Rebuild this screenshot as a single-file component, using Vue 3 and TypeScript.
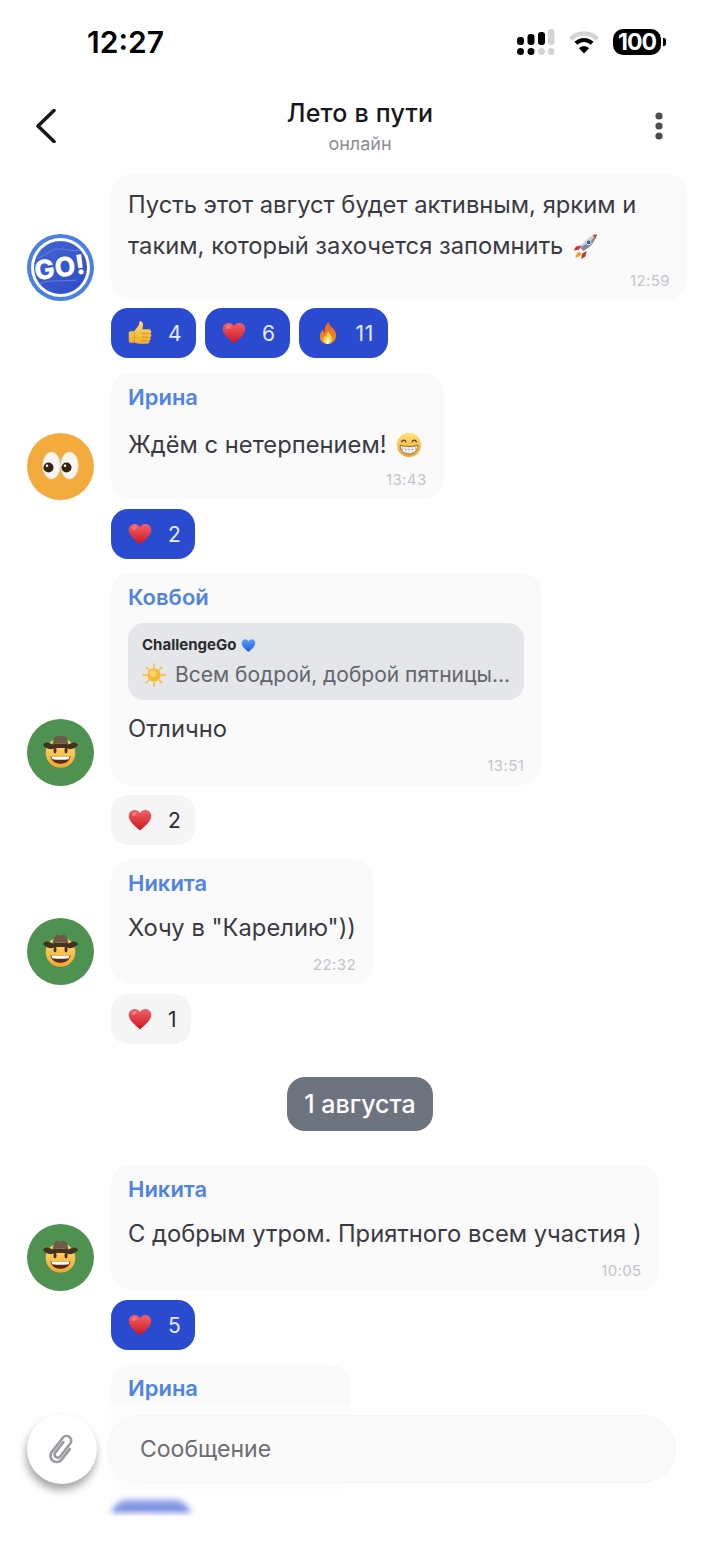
<script setup lang="ts">
type Emoji = 'thumb' | 'heart' | 'fire'

interface Reaction {
  emoji: Emoji
  count: number
}

interface ChatItem {
  id: number
  date?: string
  avatar?: 'go' | 'eyes' | 'cowboy'
  name?: string
  quote?: string
  text?: string
  trailing?: 'rocket' | 'grin'
  time?: string
  active?: boolean
  reactions?: Reaction[]
}

const items: ChatItem[] = [
  {
    id: 1,
    avatar: 'go',
    text: 'Пусть этот август будет активным, ярким и таким, который захочется запомнить',
    trailing: 'rocket',
    time: '12:59',
    active: true,
    reactions: [
      { emoji: 'thumb', count: 4 },
      { emoji: 'heart', count: 6 },
      { emoji: 'fire', count: 11 },
    ],
  },
  {
    id: 2,
    avatar: 'eyes',
    name: 'Ирина',
    text: 'Ждём с нетерпением!',
    trailing: 'grin',
    time: '13:43',
    active: true,
    reactions: [{ emoji: 'heart', count: 2 }],
  },
  {
    id: 3,
    avatar: 'cowboy',
    name: 'Ковбой',
    quote: 'Всем бодрой, доброй пятницы...',
    text: 'Отлично',
    time: '13:51',
    reactions: [{ emoji: 'heart', count: 2 }],
  },
  {
    id: 4,
    avatar: 'cowboy',
    name: 'Никита',
    text: 'Хочу в "Карелию"))',
    time: '22:32',
    reactions: [{ emoji: 'heart', count: 1 }],
  },
  { id: 5, date: '1 августа' },
  {
    id: 6,
    avatar: 'cowboy',
    name: 'Никита',
    text: 'С добрым утром. Приятного всем участия )',
    time: '10:05',
    active: true,
    reactions: [{ emoji: 'heart', count: 5 }],
  },
  // scrolled under the composer, only the sender and the pill's top show
  {
    id: 7,
    name: 'Ирина',
    active: true,
    reactions: [{ emoji: 'heart', count: 1 }],
  },
]
</script>

<template>
  <div class="screen">
    <svg class="sprites" width="0" height="0" aria-hidden="true">
      <defs>
        <linearGradient id="g-heart" x1="0" y1="0" x2="0" y2="1">
          <stop offset="0" stop-color="#f4626a" />
          <stop offset="1" stop-color="#c9151f" />
        </linearGradient>
        <linearGradient id="g-blue" x1="0" y1="0" x2="0" y2="1">
          <stop offset="0" stop-color="#5b9cf5" />
          <stop offset="1" stop-color="#1f5fe0" />
        </linearGradient>
        <linearGradient id="g-thumb" x1="0" y1="0" x2="0" y2="1">
          <stop offset="0" stop-color="#ffdc6e" />
          <stop offset="1" stop-color="#eea92c" />
        </linearGradient>
        <linearGradient id="g-face" x1="0" y1="0" x2="0" y2="1">
          <stop offset="0" stop-color="#ffe27a" />
          <stop offset="1" stop-color="#f2a52e" />
        </linearGradient>
        <linearGradient id="g-fire" x1="0" y1="0" x2="0" y2="1">
          <stop offset="0" stop-color="#ee5a24" />
          <stop offset="1" stop-color="#f59a20" />
        </linearGradient>
        <linearGradient id="g-go" x1="0" y1="0" x2="1" y2="1">
          <stop offset="0" stop-color="#4466d2" />
          <stop offset="1" stop-color="#2e4ac8" />
        </linearGradient>
        <symbol id="e-heart" viewBox="0 0 32 32">
          <path d="M16 30C9 23.500 1 17.500 1 10.500 1 5.500 4.800 2.500 8.900 2.500c2.900 0 5.600 1.500 7.100 4.300 1.500-2.800 4.200-4.300 7.100-4.300 4.100 0 7.900 3 7.900 8 0 7-8 13-15 19.500z" fill="url(#g-heart)" />
          <ellipse cx="8.500" cy="8" rx="3.500" ry="2.200" fill="#fff" opacity=".25" transform="rotate(-30 8.500 8)" />
        </symbol>
        <symbol id="e-blue" viewBox="0 0 32 32">
          <path d="M16 30C9 23.500 1.500 17.500 1.500 10.500 1.500 5.500 5.300 2.500 9.200 2.500c2.900 0 5.300 1.500 6.800 4.300 1.500-2.800 3.900-4.300 6.800-4.300 3.900 0 7.700 3 7.700 8 0 7-7.500 13-14.500 19.500z" fill="url(#g-blue)" />
        </symbol>
        <symbol id="e-thumb" viewBox="0 0 32 32">
          <path d="M1 16c0-1.300 1-2.300 2.300-2.300h5l5.300-7c.9-1.400 1.300-2.800 1.300-4.200C14.900.7 15.900 0 17 .3c2.200.6 3.300 2.800 3 5l-.8 5.700h8.600c1.900 0 3.200 1.400 3.200 3.100 0 1-.5 1.800-1.100 2.400.8.600 1.200 1.500 1.200 2.400 0 1.200-.7 2.200-1.600 2.700.4.500.6 1.200.6 1.900 0 1.200-.7 2.200-1.700 2.600.2.400.3.800.3 1.300 0 1.700-1.400 2.900-3.200 2.900H14c-2.300 0-3.500-1-5.200-1.300H3.300C2 29 1 28 1 26.700z" fill="url(#g-thumb)" />
          <path d="M19 16.500h9M19 21.500h8M19 26h6" stroke="#c98518" stroke-width="1" stroke-linecap="round" fill="none" />
          <path d="M8.800 14v14.500" stroke="#d8941f" stroke-width="1" fill="none" />
        </symbol>
        <symbol id="e-fire" viewBox="0 0 32 32">
          <path d="M16.500 1c1 5 6.200 7.800 8.800 12.500 2.700 5 1.300 11-2.400 14.200-2 1.800-4.500 3-7.200 3-6 0-10.500-4.500-10.500-10.200 0-4 2-6.800 3.900-9.300.3 2 1 3.300 2.400 4.200C11 10.500 12.500 5 16.500 1z" fill="url(#g-fire)" />
          <path d="M16.500 14c.6 2.700 3.900 4.600 4.700 8 .8 3.600-1.900 8.500-5.400 8.500-3.600 0-6.200-3-6-6.300.2-2.500 1.700-4 2.800-5.300.2 1 .6 1.700 1.300 2.100 0-2.700.8-5.100 2.600-7z" fill="#fcd34a" />
          <path d="M16 21c.3 1.600 2.200 2.800 2.400 5 .2 2.300-1 4.500-2.700 4.500-2 0-3.200-1.800-3-3.700.2-2 2.400-3.600 3.300-5.800z" fill="#fff3c4" />
        </symbol>
        <symbol id="e-rocket" viewBox="0 0 32 32">
          <path d="M12 15 5 16.500l-3 5 6.500-.8z" fill="#c9352b" />
          <path d="M18 22l-1.500 7-5 3 .8-6.500z" fill="#c9352b" />
          <path d="M9 23c-2.500 1-4 3-5 7.500 4.500-1 6.500-2.500 7.500-5z" fill="#f59a20" />
          <path d="M10 18C15 9 21 4 30.500 1.500 28 11 23 17 14 22z" fill="#c9ced8" />
          <path d="M10 18 12 20l2 2C23 17 28 11 30.500 1.500 26 8 19 13 10 18z" fill="#7f8795" />
          <path d="M25 2.800c1 .6 3.400 3 4.200 4.300l1.300-5.600z" fill="#d2382c" />
          <circle cx="20.500" cy="11.500" r="3" fill="#3f5f8f" stroke="#eef0f4" stroke-width="1.200" />
        </symbol>
        <symbol id="e-grin" viewBox="0 0 32 32">
          <circle cx="16" cy="16" r="15" fill="url(#g-face)" />
          <path d="M7 12c.8-2.600 4.200-2.600 5 0M20 12c.8-2.600 4.200-2.600 5 0" stroke="#5a3a12" stroke-width="1.600" fill="none" stroke-linecap="round" />
          <path d="M5 16.500c7 1.800 15 1.800 22 0 0 6.500-4.800 10.500-11 10.500S5 23 5 16.500z" fill="#fff" stroke="#7a4a14" stroke-width="1" />
          <path d="M5.500 20.500c6.500 1.400 14.500 1.400 21 0M8 17.300v8M12 17.800v8.800M16 18v9M20 17.800v8.800M24 17.300v8" stroke="#a9a9a9" stroke-width=".7" fill="none" />
        </symbol>
        <symbol id="e-sun" viewBox="0 0 32 32">
          <g stroke="#f5c24a" stroke-width="2.400" stroke-linecap="round">
            <path d="M16 1.500v4M16 26.500v4M1.500 16h4M26.500 16h4M5.800 5.800l2.800 2.800M23.400 23.400l2.800 2.800M5.800 26.200l2.800-2.800M23.400 8.600l2.800-2.800" />
          </g>
          <circle cx="16" cy="16" r="9" fill="#f7b92e" />
          <circle cx="14.500" cy="14" r="4.500" fill="#fde08a" opacity=".7" />
        </symbol>
        <symbol id="e-eyes" viewBox="0 0 67 67">
          <ellipse cx="24.500" cy="32.500" rx="8.800" ry="13.500" fill="#f6f5f0" stroke="#dcdad2" stroke-width=".8" />
          <ellipse cx="42.500" cy="32.500" rx="8.800" ry="13.500" fill="#f6f5f0" stroke="#dcdad2" stroke-width=".8" />
          <circle cx="21.500" cy="34.500" r="5" fill="#33200e" />
          <circle cx="39.500" cy="34.500" r="5" fill="#33200e" />
          <circle cx="20" cy="32.800" r="1.300" fill="#fff" />
          <circle cx="38" cy="32.800" r="1.300" fill="#fff" />
        </symbol>
        <symbol id="e-cowboy" viewBox="0 0 67 67">
          <circle cx="33.500" cy="34" r="14.800" fill="url(#g-face)" />
          <path d="M16 26c.5-1.800 3-2.800 5.500-2.300 1.500.3 2.800.9 3.800 1.600 5.500-1.200 11-1.200 16.400 0 1-.7 2.300-1.300 3.800-1.600 2.500-.5 5 .5 5.500 2.300-1.200 2-4.500 4-8 4.300-5.500-1.800-13.500-1.800-19 0-3.500-.3-6.800-2.300-8-4.300z" fill="#43301f" />
          <path d="M25.500 25.500c.5-3.500 1.800-8.500 4.500-8.800 1.500-.2 2.300.8 3.500.8s2-1 3.500-.8c2.700.3 4 5.300 4.500 8.800-5.500-1.200-10.500-1.200-16 0z" fill="#6f5a4a" />
          <ellipse cx="28" cy="31.500" rx="1.500" ry="2.800" fill="#4a2c10" />
          <ellipse cx="39" cy="31.500" rx="1.500" ry="2.800" fill="#4a2c10" />
          <path d="M23.500 37c6.500 1.200 13.500 1.200 20 0-.5 5-5 7.800-10 7.800s-9.500-2.800-10-7.800z" fill="#5a2c12" />
          <path d="M24.300 37.300c6 1 12.400 1 18.400 0-.2 1.300-.6 2.200-1.100 2.900-5 .7-11.200.7-16.200 0-.5-.7-.9-1.600-1.100-2.900z" fill="#fff" />
        </symbol>
      </defs>
    </svg>

    <div class="status-bar">
      <span class="clock">12:27</span>
      <div class="status-icons">
        <svg width="38" height="26" viewBox="0 0 38 26">
          <rect x="0" y="8" width="7" height="8" rx="3" fill="#000" />
          <rect x="10.500" y="5" width="7" height="11" rx="3" fill="#000" />
          <rect x="21" y="3" width="7" height="13" rx="3" fill="#000" />
          <rect x="31" y="0" width="6.500" height="16" rx="3" fill="#d4d4d6" />
          <rect x="0" y="19" width="7" height="7" rx="3.500" fill="#000" />
          <rect x="10.500" y="19" width="7" height="7" rx="3.500" fill="#000" />
          <rect x="21" y="19" width="7" height="7" rx="3.500" fill="#d4d4d6" />
          <rect x="31" y="19" width="6.500" height="7" rx="3.500" fill="#d4d4d6" />
        </svg>
        <svg width="32" height="24" viewBox="0 0 32 24">
          <path d="M2.500 9C10 1.500 22 1.500 29.500 9" stroke="#d4d4d6" stroke-width="4.500" fill="none" />
          <path d="M7.800 13.200c4.700-4.400 11.700-4.400 16.400 0" stroke="#000" stroke-width="4" fill="none" />
          <path d="M16 23.500l-5-5.300c2.800-2.600 7.200-2.600 10 0z" fill="#000" />
        </svg>
        <div class="battery">
          <span>100</span>
        </div>
      </div>
    </div>

    <header class="chat-header">
      <svg class="back" width="20" height="34" viewBox="0 0 20 34">
        <path d="M18 1.500 2 17l16 15.500" stroke="#17181c" stroke-width="3.600" fill="none" stroke-linecap="round" stroke-linejoin="round" />
      </svg>
      <div class="chat-title">
        <h1>Лето в пути</h1>
        <p>онлайн</p>
      </div>
      <svg class="more" width="8" height="28" viewBox="0 0 8 28">
        <circle cx="4" cy="4" r="3.600" fill="#4b4c52" />
        <circle cx="4" cy="14" r="3.600" fill="#4b4c52" />
        <circle cx="4" cy="24" r="3.600" fill="#4b4c52" />
      </svg>
    </header>

    <main class="chat">
      <template v-for="item in items" :key="item.id">
        <div v-if="item.date" class="date-pill">{{ item.date }}</div>
        <section v-else class="group">
          <div class="message">
            <div :class="['avatar', item.avatar]">
              <svg v-if="item.avatar === 'go'" width="67" height="67" viewBox="0 0 67 67">
                <circle cx="33.500" cy="33.500" r="33.500" fill="#4b7fe2" />
                <circle cx="33.500" cy="33.500" r="29.500" fill="#fff" />
                <circle cx="33.500" cy="33.500" r="26.500" fill="url(#g-go)" />
                <path d="M10 24c8-1 12-8 20-9 6-1 14 3 23 1M12 50c10-5 22-2 38-4" stroke="#6d8ce0" stroke-width=".8" fill="none" />
                <text class="go-text" x="33" y="43" text-anchor="middle" transform="rotate(-8 33 36)">GO!</text>
              </svg>
              <svg v-else-if="item.avatar" width="67" height="67"><use :href="`#e-${item.avatar}`" /></svg>
            </div>
            <div :class="['bubble', { clipped: !item.text }]">
              <div v-if="item.name" class="sender">{{ item.name }}</div>
              <div v-if="item.quote" class="quote">
                <div class="quote-author">ChallengeGo <svg width="15" height="15"><use href="#e-blue" /></svg></div>
                <div class="quote-text"><svg width="24" height="24"><use href="#e-sun" /></svg>{{ item.quote }}</div>
              </div>
              <p v-if="item.text" :class="['text', { 'with-emoji': item.trailing }]">{{ item.text }}<svg v-if="item.trailing" class="trailing" width="26" height="26"><use :href="`#e-${item.trailing}`" /></svg></p>
              <div v-if="item.time" class="time">{{ item.time }}</div>
            </div>
          </div>
          <div class="reactions">
            <div v-for="r in item.reactions" :key="r.emoji" :class="['reaction', { active: item.active }]">
              <svg width="24" height="24"><use :href="`#e-${r.emoji}`" /></svg>
              <span>{{ r.count }}</span>
            </div>
          </div>
        </section>
      </template>
    </main>

    <div class="composer">
      <button class="attach" type="button" aria-label="Прикрепить">
        <svg width="34" height="36" viewBox="-17 -18 34 36">
          <path transform="rotate(38) scale(.78)" d="M8 -6V11a8 8 0 0 1-16 0V-12a6 6 0 0 1 12 0V9a4 4 0 0 1-8 0V-8" stroke="#9b9ca1" stroke-width="3.400" fill="none" stroke-linecap="round" />
        </svg>
      </button>
      <div class="input">Сообщение</div>
    </div>
  </div>
</template>

<style scoped>
.screen {
  position: relative;
  width: 720px;
  height: 1558px;
  display: flex;
  flex-direction: column;
  overflow: hidden;
  background: #fff;
  font-family: Inter, "Noto Sans", sans-serif;
  color: #3a3b42;
}

.sprites {
  position: absolute;
}

.status-bar {
  height: 84px;
  flex: none;
  display: flex;
  align-items: center;
  justify-content: space-between;
  padding: 0 59px 0 87px;
}

.clock {
  font-size: 30px;
  font-weight: 600;
  color: #000;
}

.status-icons {
  display: flex;
  align-items: center;
  gap: 13px;
}

.battery {
  position: relative;
  width: 48px;
  height: 26px;
  border-radius: 10px;
  background: #000;
  color: #fff;
  font-size: 23px;
  font-weight: 700;
  letter-spacing: -1px;
  display: flex;
  align-items: center;
  justify-content: center;
}

.battery::after {
  content: "";
  position: absolute;
  right: -5px;
  top: 9px;
  width: 3px;
  height: 8px;
  border-radius: 0 2px 2px 0;
  background: #000;
}

.chat-header {
  height: 90px;
  flex: none;
  box-sizing: border-box;
  display: grid;
  grid-template-columns: 1fr auto 1fr;
  align-items: center;
  padding: 0 36px 6px;
}

.more {
  justify-self: end;
  margin-right: 21px;
}

.chat-title {
  text-align: center;
}

.chat-title h1 {
  margin: 0;
  font-size: 25px;
  line-height: 30px;
  font-weight: 500;
  letter-spacing: 0.2px;
  color: #17181c;
}

.chat-title p {
  margin: 5px 0 0;
  font-size: 18px;
  line-height: 22px;
  color: #8b8d94;
}

.chat {
  flex: 1;
  min-height: 0;
  display: flex;
  flex-direction: column;
  align-items: flex-start;
  gap: 14px;
  padding-left: 27px;
  overflow: hidden;
}

.group {
  display: flex;
  flex-direction: column;
  gap: 10px;
}

.group:first-child {
  gap: 8px;
  margin-bottom: 1px;
}

.message {
  display: flex;
  align-items: flex-end;
  gap: 17px;
}

.avatar {
  width: 67px;
  height: 67px;
  flex: none;
  margin-bottom: -1px;
  border-radius: 50%;
}

.avatar svg {
  display: block;
}

.avatar.eyes {
  background: #f4ab3d;
}

.avatar.cowboy {
  background: #4f9150;
}

.go-text {
  font-family: Inter, sans-serif;
  font-size: 27px;
  font-weight: 800;
  fill: #fff;
}

.bubble {
  max-width: 576px;
  box-sizing: border-box;
  padding: 10px 17px;
  border-radius: 20px;
  background: #fafafb;
}

.bubble.clipped {
  width: 239px;
  height: 126px;
}

.sender {
  margin-top: 1px;
  font-size: 22px;
  line-height: 26px;
  font-weight: 600;
  color: #5083e2;
}

.text {
  margin: 0;
  font-size: 23.75px;
  line-height: 41px;
  color: #3a3b42;
}

.sender + .text {
  margin-top: 11px;
}

.sender + .text.with-emoji {
  margin-top: 14px;
}

.trailing {
  margin: 0 5px 0 9px;
  vertical-align: -5px;
}

.quote {
  margin: 13px 0 8px;
  padding: 11px 14px 10px;
  border-radius: 16px;
  background: #e4e6ea;
  white-space: nowrap;
}

.quote-author {
  display: flex;
  align-items: center;
  gap: 5px;
  font-size: 15px;
  line-height: 22px;
  font-weight: 700;
  color: #2a2b30;
}

.quote-text {
  display: flex;
  align-items: center;
  gap: 9px;
  margin-top: 4px;
  font-size: 21px;
  line-height: 30px;
  color: #63656c;
}

.time {
  margin-top: 8px;
  font-size: 15px;
  line-height: 18px;
  letter-spacing: 0.4px;
  text-align: right;
  color: #c2c4c9;
}

.with-emoji + .time {
  margin-top: 6px;
}

.reactions {
  display: flex;
  gap: 9px;
  margin-left: 84px;
}

.reaction {
  height: 50px;
  display: flex;
  align-items: center;
  gap: 16px;
  padding: 0 14px 0 17px;
  border-radius: 17px;
  background: #f5f5f6;
  font-size: 21px;
  letter-spacing: 0.5px;
  color: #2a2b30;
}

.reaction.active {
  background: #2a4bd0;
  color: #e8ecff;
}

.date-pill {
  align-self: center;
  margin: 19px 27px 20px 0;
  padding: 0 17px;
  height: 54px;
  display: flex;
  align-items: center;
  border-radius: 18px;
  background: #6e7380;
  color: #fff;
  font-size: 25px;
  font-weight: 500;
}

.composer {
  position: absolute;
  left: 0;
  right: 0;
  bottom: 0;
  height: 153px;
  display: flex;
  align-items: flex-start;
  gap: 10px;
  padding: 10px 44px 0 27px;
  box-sizing: border-box;
  backdrop-filter: blur(3px);
  background: linear-gradient(to bottom, rgba(255, 255, 255, 0.42) 104px, #fff 112px);
}

.attach {
  width: 70px;
  height: 70px;
  flex: none;
  margin-top: -1px;
  padding: 0;
  border: 0;
  border-radius: 50%;
  background: #fff;
  box-shadow: -1px 6px 9px rgba(0, 0, 0, 0.36);
  display: flex;
  align-items: center;
  justify-content: center;
}

.input {
  flex: 1;
  height: 68px;
  box-sizing: border-box;
  padding-left: 32px;
  display: flex;
  align-items: center;
  border-radius: 34px;
  background: #fafafa;
  border: 1px solid #f5f5f6;
  font-size: 23px;
  color: #6c6d72;
}
</style>
